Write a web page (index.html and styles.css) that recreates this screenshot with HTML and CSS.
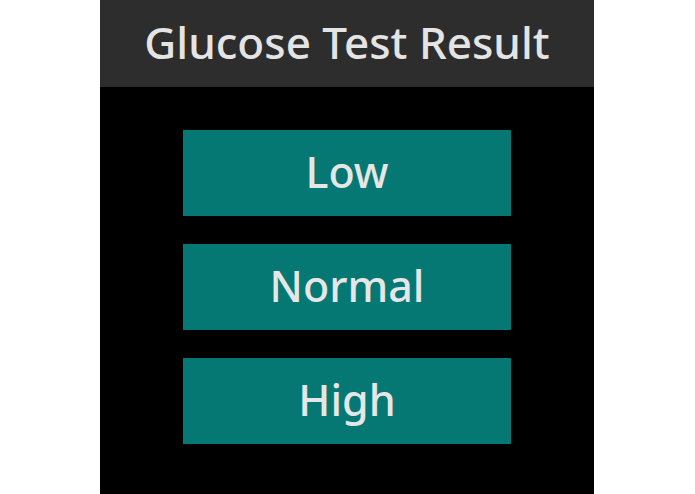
FILE: index.html
```html
<!DOCTYPE html>
<html lang="en">
<head>
    <meta charset="UTF-8">
    <meta name="viewport" content="width=device-width, initial-scale=1.0">
    <title>Glucose Test Result</title>
    <link rel="stylesheet" href="styles.css">
</head>
<body>
    <div class="watch-screen">
        <!-- Barra de título -->
        <div class="title-bar">
            <h1>Glucose Test Result</h1>
        </div>

        <!-- Opciones de resultado -->
        <div class="result-list">
            <button type="button" class="btn-result">Low</button>
            <button type="button" class="btn-result">Normal</button>
            <button type="button" class="btn-result">High</button>
        </div>
    </div>
</body>
</html>
```

FILE: styles.css
```css
body {
    font-family: "Noto Sans", "Open Sans", sans-serif;
    margin: 0;
    padding-left: 100px;
    height: 100vh;
    background-color: #ffffff;
}
.watch-screen {
    width: 494px;
    height: 494px;
    background-color: #000000;
    display: flex;
    flex-direction: column;
}
.title-bar {
    height: 87px;
    background-color: #2d2d2d;
    display: flex;
    justify-content: center;
    align-items: center;
}
.title-bar h1 {
    margin: 0 0 4px 0;
    font-size: 44px;
    font-weight: 500;
    color: #e4e4e4;
}
.result-list {
    display: flex;
    flex-direction: column;
    align-items: center;
    gap: 28px;
    padding-top: 43px;
}
.btn-result {
    width: 328px;
    height: 86px;
    padding: 0 0 4px 0;
    background-color: #057873;
    color: #e6e6e6;
    border: none;
    border-radius: 0;
    font-family: inherit;
    font-size: 43px;
    font-weight: 500;
    cursor: pointer;
}
.btn-result:hover {
    background-color: #06857f;
}
```
